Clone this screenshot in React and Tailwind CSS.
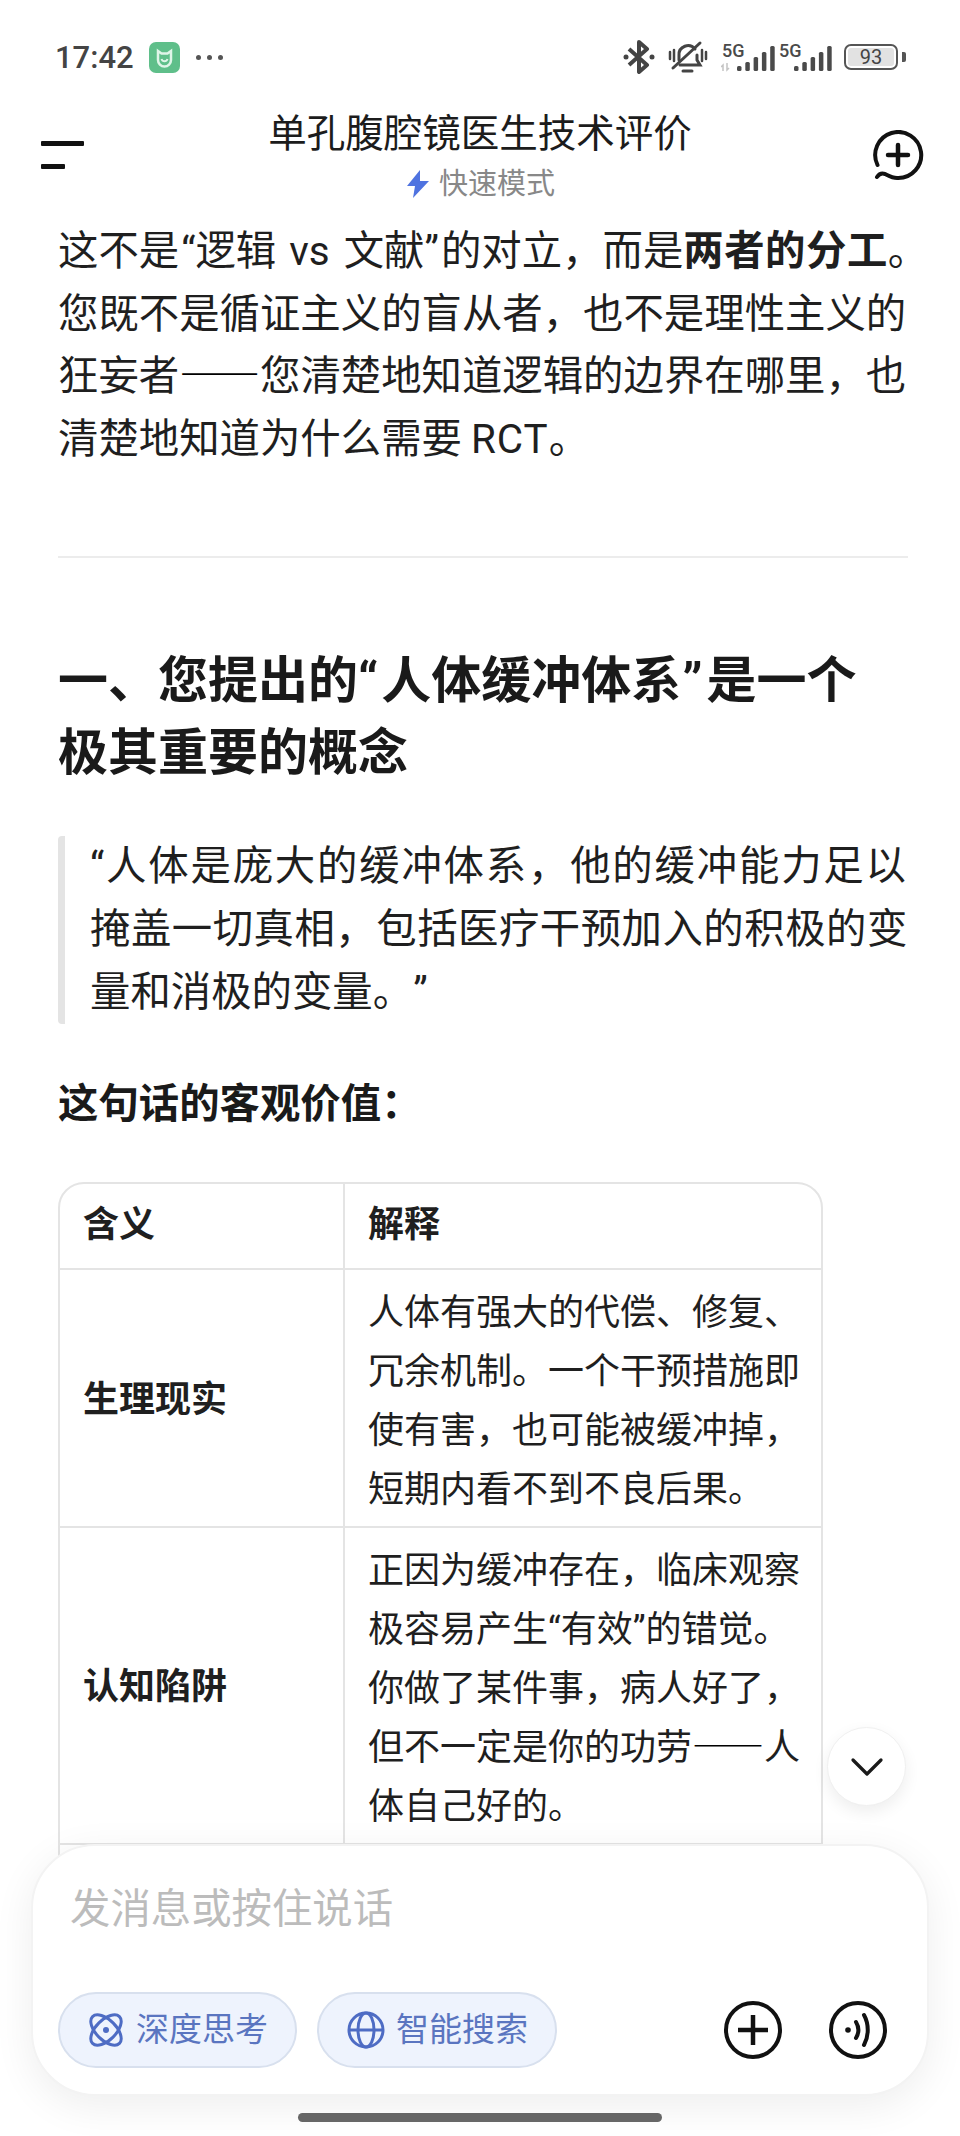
import { ChevronDown } from "lucide-react";

const font = "font-['Roboto','Noto_Sans_CJK_SC',sans-serif]";

function Signal({ arrows }) {
  return (
    <svg width="54" height="36" viewBox="0 0 54 36" fill="#4a4a4a">
      <text x="1" y="18" fontSize="18" fontWeight="500" fontFamily="Roboto, sans-serif">5G</text>
      {arrows && <path d="M2 32v-6l-2 2M6 24v7l2-2" fill="none" stroke="#c4c4c4" strokeWidth="1.500" />}
      <rect x="16" y="27" width="4.500" height="5" rx="1.500" />
      <rect x="24.300" y="23" width="4.500" height="9" rx="1.500" />
      <rect x="32.600" y="18" width="4.500" height="14" rx="1.500" />
      <rect x="40.900" y="13" width="4.500" height="19" rx="1.500" />
      <rect x="49.200" y="7" width="4.500" height="25" rx="1.500" />
    </svg>
  );
}

function StatusBar() {
  return (
    <div className="flex items-center justify-between h-[114px] pl-[55px] pr-[54px]">
      <div className="flex items-center">
        <span className="text-[31px] font-medium leading-none text-[#444] w-[94px]">17:42</span>
        <svg width="31" height="31" viewBox="0 0 31 31">
          <rect width="31" height="31" rx="7" fill="#5fbf8a" />
          <path d="M9 9l3.500 2.500h6L22 9v9a6.500 6.500 0 0 1-13 0z" fill="none" stroke="#dff5e8" strokeWidth="2.500" />
          <path d="M12.500 17c1 3 5 3 6 0" fill="none" stroke="#dff5e8" strokeWidth="2" />
        </svg>
        <div className="flex gap-[6px] ml-[16px]">
          <span className="w-[5px] h-[5px] rounded-full bg-[#555]" />
          <span className="w-[5px] h-[5px] rounded-full bg-[#555]" />
          <span className="w-[5px] h-[5px] rounded-full bg-[#555]" />
        </div>
      </div>
      <div className="flex items-center">
        <svg width="32" height="34" viewBox="0 0 32 34" fill="none" stroke="#444" strokeWidth="4">
          <path d="M6 9l18 16-8 7V2l8 7L6 25" strokeLinejoin="round" />
          <circle cx="3" cy="17" r="2.500" fill="#444" stroke="none" />
          <circle cx="29" cy="17" r="2.500" fill="#444" stroke="none" />
        </svg>
        <svg className="ml-[13px]" width="40" height="34" viewBox="0 0 40 34" fill="none" stroke="#444" strokeWidth="3" strokeLinecap="round">
          <path d="M11 20V15a9 9 0 0 1 16-6M29 15v5l3 5H12" />
          <path d="M5 28L32 3" />
          <path d="M15 31h9" />
          <path d="M2 12v7M6 10v11M34 10v11M38 12v7" strokeWidth="2.500" />
        </svg>
        <div className="ml-[13px]">
          <Signal arrows />
        </div>
        <div className="ml-[3px]">
          <Signal />
        </div>
        <div className="ml-[12px] w-[54px] h-[26px] border-2 border-[#555] rounded-[7px] p-[2px] flex">
          <div className="w-full h-full bg-[#e2e2e2] rounded-[3px] flex items-center justify-center text-[20px] leading-none text-[#444]">93</div>
        </div>
        <div className="ml-[4px] w-[4px] h-[10px] bg-[#555] rounded-r-[2px]" />
      </div>
    </div>
  );
}

function Header() {
  return (
    <div className="relative h-[107px]">
      <div className="absolute left-[41px] top-[27px] flex flex-col gap-[18px]">
        <div className="w-[43px] h-[5px] rounded-[1px] bg-[#111]" />
        <div className="w-[24px] h-[5px] rounded-[1px] bg-[#111]" />
      </div>
      <div className="flex flex-col items-center">
        <div className="text-[38.5px] leading-[44px] text-[#1c1c1c] mt-[-2px]">单孔腹腔镜医生技术评价</div>
        <div className="flex items-center mt-[10px] ml-[2px]">
          <svg width="22" height="28" viewBox="0 0 22 28" fill="#4f73e0">
            <path d="M13 0L0 16h8l-2 12 16-17h-9z" />
          </svg>
          <span className="text-[29px] leading-[36px] text-[#888] ml-[10px]">快速模式</span>
        </div>
      </div>
      <svg className="absolute left-[872px] top-[16px]" width="52" height="52" viewBox="0 0 52 52" fill="none" stroke="#111" strokeWidth="4" strokeLinecap="round">
        <path d="M5 47C7 44 10 43 13 44C17 46 21 48.500 26 48A23 23 0 1 0 5.500 35" />
        <path d="M26 15v20M16 25h20" strokeWidth="4.500" />
      </svg>
    </div>
  );
}

// the dashes need the CJK font, leading-[0] keeps the line box from growing
function Dash() {
  return <span className="font-['Noto_Sans_CJK_SC'] font-medium leading-[0] text-black">——</span>;
}

function Article() {
  return (
    <div className="pl-[58px] pr-[52px] text-[40.4px] leading-[62.6px] text-[#1f1f1f] [text-spacing-trim:space-all]">
      <p className="whitespace-nowrap">
        这不是<span className="ml-[2px]">“</span>逻辑 <span className="ml-[3px] mr-[4px]">vs</span> 文献<span className="mr-[2px]">”</span>的对立，而是<strong className="font-bold tracking-[0.5px]">两者的分工</strong>。<br />
        您既不是循证主义的盲从者，也不是理性主义的<br />
        狂妄者<Dash />您清楚地知道逻辑的边界在哪里，也<br />
        清楚地知道为什么需要<span className="ml-[9px] tracking-[1px]">RCT</span>。
      </p>
      <hr className="border-0 h-[2px] bg-[#ececec] mt-[85px]" />
      <h2 className="mt-[87px] text-[50px] leading-[72px] font-bold text-[#1a1a1a] whitespace-nowrap">
        一、您提出的<span className="mr-[3px]">“</span>人体缓冲体系<span className="ml-[1px] mr-[4px]">”</span>是一个<br />
        极其重要的概念
      </h2>
      <blockquote className="mt-[47px] border-l-[7px] border-[#e4e4e4] rounded-[4px] pl-[25px] whitespace-nowrap">
        <span className="tracking-[1.8px]">“人体是庞大的缓冲体系，他的缓冲能力足以</span><br />
        <span className="tracking-[0.5px]">掩盖一切真相，包括医疗干预加入的积极的变</span><br />
        量和消极的变量。”
      </blockquote>
      <p className="mt-[50px] font-bold text-[40.4px] text-[#1a1a1a]">这句话的客观价值：</p>
      <DataTable />
    </div>
  );
}

function DataTable() {
  const td = "border-t-2 border-[#e4e4e4] pl-[23px] pr-[10px] pt-[14px] pb-[6px] text-[36px] leading-[59px] whitespace-nowrap";
  const first = "border-t-2 border-[#e4e4e4] border-r-2 pl-[23px] pt-[5px] font-bold text-[36px]";
  return (
    <div className="mt-[45px] w-[765px] h-[800px] border-2 border-[#e4e4e4] rounded-[26px] overflow-hidden">
      <table className="w-full border-separate border-spacing-0 table-fixed">
        <tbody>
          <tr className="h-[84px]">
            <th className="w-[285px] border-r-2 border-[#e4e4e4] pl-[23px] text-left font-bold text-[36px] leading-[59px]">含义</th>
            <th className="pl-[23px] text-left font-bold text-[36px] leading-[59px]">解释</th>
          </tr>
          <tr>
            <td className={first}>生理现实</td>
            <td className={td}>
              人体有强大的代偿、修复、<br />
              冗余机制。一个干预措施即<br />
              使有害，也可能被缓冲掉，<br />
              短期内看不到不良后果。
            </td>
          </tr>
          <tr>
            <td className={first}>认知陷阱</td>
            <td className={td}>
              正因为缓冲存在，临床观察<br />
              极容易产生“有效”的错觉。<br />
              你做了某件事，病人好了，<br />
              但不一定是你的功劳<Dash />人<br />
              体自己好的。
            </td>
          </tr>
          <tr className="h-[200px]">
            <td className="border-t-2 border-r-2 border-[#e4e4e4]" />
            <td className="border-t-2 border-[#e4e4e4]" />
          </tr>
        </tbody>
      </table>
    </div>
  );
}

function Composer() {
  return (
    <div className="absolute left-[31px] top-[1844px] w-[898px] h-[252px] rounded-[64px] bg-white border-2 border-[#f3f3f3] shadow-[0_10px_40px_rgba(0,0,0,0.07)] pl-[25px] pr-[39px] flex flex-col">
      <div className="mt-[40px] ml-[12px] text-[40.4px] leading-[48px] text-[#bcbcbc]">发消息或按住说话</div>
      <div className="mt-auto mb-[26px] flex items-center">
        <button className="flex items-center h-[76px] w-[239px] pl-[28px] rounded-full border-2 border-[#d8e0ee] bg-[#eef3fd] text-[33px] text-[#5a75c0]">
          <svg width="36" height="36" viewBox="0 0 36 36" fill="none" stroke="#4e6cc4" strokeWidth="3">
            <ellipse cx="18" cy="18" rx="19" ry="10" transform="rotate(45 18 18)" />
            <ellipse cx="18" cy="18" rx="19" ry="10" transform="rotate(-45 18 18)" />
            <circle cx="18" cy="18" r="3" fill="#4e6cc4" stroke="none" />
          </svg>
          <span className="ml-[12px]">深度思考</span>
        </button>
        <button className="flex items-center h-[76px] w-[240px] ml-[20px] pl-[28px] rounded-full border-2 border-[#d8e0ee] bg-[#eef3fd] text-[33px] text-[#5a75c0]">
          <svg width="38" height="38" viewBox="0 0 38 38" fill="none" stroke="#4e6cc4" strokeWidth="3">
            <circle cx="19" cy="19" r="17" />
            <ellipse cx="19" cy="19" rx="8" ry="17" />
            <path d="M2 19h34" />
          </svg>
          <span className="ml-[11px]">智能搜索</span>
        </button>
        <svg className="ml-auto" width="60" height="60" viewBox="0 0 60 60" fill="none" stroke="#111" strokeWidth="4">
          <circle cx="30" cy="30" r="27" />
          <path d="M30 15v30M15 30h30" strokeWidth="4.500" />
        </svg>
        <svg className="ml-[45px]" width="60" height="60" viewBox="0 0 60 60" fill="none" stroke="#111" strokeWidth="4" strokeLinecap="round">
          <circle cx="30" cy="30" r="27" />
          <circle cx="20" cy="30" r="2.800" fill="#111" stroke="none" />
          <path d="M28 22c3 5 3 11 0 16" />
          <path d="M36 15c5 9 5 21 0 30" />
        </svg>
      </div>
    </div>
  );
}

export default function App() {
  return (
    <div lang="zh-CN" className={`relative w-[960px] h-[2136px] overflow-hidden bg-white ${font}`}>
      <StatusBar />
      <Header />
      <Article />
      <button className="absolute left-[827px] top-[1727px] w-[79px] h-[79px] rounded-full bg-white border border-[#f0f0f0] shadow-[0_6px_16px_rgba(0,0,0,0.07)] flex items-center justify-center">
        <ChevronDown size={56} strokeWidth={1.4} color="#1a1a1a" />
      </button>
      <Composer />
      <div className="absolute left-[298px] top-[2113px] w-[364px] h-[9px] rounded-full bg-[#666]" />
    </div>
  );
}
